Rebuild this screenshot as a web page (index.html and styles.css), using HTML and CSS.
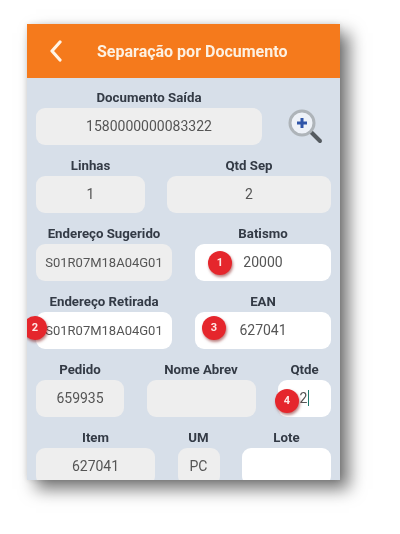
FILE: index.html
```html
<!DOCTYPE html>
<html lang="en">
<head>
    <meta charset="UTF-8">
    <title>Separação por Documento</title>
    <link rel="stylesheet" href="styles.css">
</head>
<body>
    <div class="phone">
        <header class="topbar">
            <svg class="back" width="14" height="22" viewBox="0 0 14 22"><path d="M11 2 L3 11 L11 20" fill="none" stroke="#fff4e6" stroke-width="3.2" stroke-linecap="round" stroke-linejoin="round"/></svg>
            <h1>Separação por Documento</h1>
        </header>

        <main class="form">
            <div class="row first">
                <div class="col w226">
                    <label>Documento Saída</label>
                    <div class="field">1580000000083322</div>
                </div>
                <svg class="zoom" width="38" height="36" viewBox="0 0 38 36">
                    <path d="M24 24 L33 33" stroke="#555b60" stroke-width="4" stroke-linecap="round"/>
                    <circle cx="15" cy="15" r="12" fill="#eef2f8" stroke="#aeb4b9" stroke-width="3"/>
                    <path d="M15 10 V20 M10 15 H20" stroke="#2f55a8" stroke-width="3"/>
                </svg>
            </div>

            <div class="row">
                <div class="col w109">
                    <label>Linhas</label>
                    <div class="field">1</div>
                </div>
                <div class="col w164">
                    <label>Qtd Sep</label>
                    <div class="field">2</div>
                </div>
            </div>

            <div class="row">
                <div class="col w136">
                    <label>Endereço Sugerido</label>
                    <div class="field small">S01R07M18A04G01</div>
                </div>
                <div class="col w136">
                    <label>Batismo</label>
                    <div class="field input">20000<span class="badge b1">1</span></div>
                </div>
            </div>

            <div class="row">
                <div class="col w136">
                    <label>Endereço Retirada</label>
                    <div class="field input small">S01R07M18A04G01<span class="badge b2">2</span></div>
                </div>
                <div class="col w136">
                    <label>EAN</label>
                    <div class="field input">627041<span class="badge b3">3</span></div>
                </div>
            </div>

            <div class="row">
                <div class="col w88">
                    <label>Pedido</label>
                    <div class="field">659935</div>
                </div>
                <div class="col w109">
                    <label>Nome Abrev</label>
                    <div class="field"></div>
                </div>
                <div class="col w53">
                    <label>Qtde</label>
                    <div class="field input"><span class="typed">2</span><span class="badge b4">4</span></div>
                </div>
            </div>

            <div class="row">
                <div class="col w119">
                    <label>Item</label>
                    <div class="field">627041</div>
                </div>
                <div class="col w42">
                    <label>UM</label>
                    <div class="field">PC</div>
                </div>
                <div class="col w89">
                    <label>Lote</label>
                    <div class="field input"></div>
                </div>
            </div>
        </main>
    </div>
</body>
</html>
```

FILE: styles.css
```css
* {
    margin: 0;
    padding: 0;
    box-sizing: border-box;
}

body {
    font-family: Roboto, sans-serif;
    background-color: #ffffff;
    padding: 24px 0 0 27px;
    height: 534px;
    overflow: hidden;
}

.phone {
    width: 313px;
    height: 456px;
    background-color: #d7dfe9;
    overflow: hidden;
    box-shadow: 9px 9px 16px rgba(0, 0, 0, 0.55), 0 0 6px rgba(0, 0, 0, 0.12);
    filter: blur(0.35px);
}

.topbar {
    height: 54px;
    background-color: #f57a1c;
    display: flex;
    align-items: center;
    padding-left: 22px;
}

.back {
    margin-right: 34px;
}

.topbar h1 {
    font-size: 16px;
    font-weight: 700;
    color: #fdf1e2;
}

.form {
    padding: 10px 9px 0;
    display: flex;
    flex-direction: column;
    gap: 11px;
}

.row {
    display: flex;
    justify-content: space-between;
}

.row.first {
    justify-content: flex-start;
}

.col {
    flex: none;
}

.w226 { width: 226px; }
.w164 { width: 164px; }
.w136 { width: 136px; }
.w119 { width: 119px; }
.w109 { width: 109px; }
.w89 { width: 89px; }
.w88 { width: 88px; }
.w53 { width: 53px; }
.w42 { width: 42px; }

label {
    display: block;
    height: 20px;
    line-height: 20px;
    text-align: center;
    font-size: 13.25px;
    font-weight: 700;
    color: #333a45;
    white-space: nowrap;
}

.field {
    position: relative;
    height: 37px;
    line-height: 37px;
    text-align: center;
    font-size: 14px;
    color: #555555;
    background-color: #eeeeee;
    border-radius: 9px;
    white-space: nowrap;
}

.field.small {
    font-size: 13px;
}

.field.input {
    background-color: #ffffff;
}

.zoom {
    margin: 20px 0 0 25px;
}

.typed {
    border-right: 1px solid #1f7a6e;
    padding-right: 1px;
}

.badge {
    position: absolute;
    width: 24px;
    height: 24px;
    line-height: 24px;
    border-radius: 50%;
    background-color: #e5262c;
    color: #ffe9e6;
    font-size: 11px;
    font-weight: 700;
    text-align: center;
    box-shadow: 1px 2px 3px rgba(120, 0, 0, 0.5);
}

.b1 { left: 13px; top: 7px; }
.b2 { left: -13px; top: 4px; }
.b3 { left: 7px; top: 4px; }
.b4 { left: -3px; top: 9px; }
```
